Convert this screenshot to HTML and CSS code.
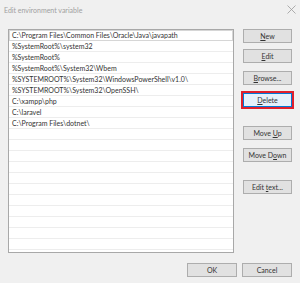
FILE: index.html
```html
<!DOCTYPE html>
<html>
<head>
<meta charset="utf-8">
<link rel="stylesheet" href="styles.css">
</head>
<body>
<div class="dialog">
  <div class="titlebar">
    <span class="title">Edit environment variable</span>
    <span class="close">
      <svg width="9" height="9" viewBox="0 0 9 9"><path d="M0.5 0.5 L8.5 8.5 M8.5 0.5 L0.5 8.5" stroke="#9a9a9a" stroke-width="0.8" fill="none"/></svg>
    </span>
  </div>
  <div class="main">
    <div class="list">
      <div class="row sel">C:\Program Files\Common Files\Oracle\Java\javapath</div>
      <div class="row">%SystemRoot%\system32</div>
      <div class="row">%SystemRoot%</div>
      <div class="row">%SystemRoot%\System32\Wbem</div>
      <div class="row">%SYSTEMROOT%\System32\WindowsPowerShell\v1.0\</div>
      <div class="row">%SYSTEMROOT%\System32\OpenSSH\</div>
      <div class="row">C:\xampp\php</div>
      <div class="row">C:\laravel</div>
      <div class="row">C:\Program Files\dotnet\</div>
      <div class="row"></div>
      <div class="row"></div>
      <div class="row"></div>
      <div class="row"></div>
      <div class="row"></div>
      <div class="row"></div>
      <div class="row"></div>
      <div class="row"></div>
      <div class="row"></div>
      <div class="row"></div>
      <div class="row"></div>
    </div>
    <div class="side">
      <button class="btn b-new"><u>N</u>ew</button>
      <button class="btn b-edit"><u>E</u>dit</button>
      <button class="btn b-browse"><u>B</u>rowse...</button>
      <div class="hl"><button class="btn b-delete"><u>D</u>elete</button></div>
      <button class="btn b-up">Move <u>U</u>p</button>
      <button class="btn b-down">Move D<u>o</u>wn</button>
      <button class="btn b-text">Edit <u>t</u>ext...</button>
    </div>
  </div>
  <div class="footer">
    <button class="btn">OK</button>
    <button class="btn">Cancel</button>
  </div>
</div>
</body>
</html>
```
FILE: styles.css
```css
html, body {
  margin: 0;
  padding: 0;
  background: #f0f0f0;
}
.dialog {
  width: 300px;
  height: 283px;
  box-sizing: border-box;
  font-family: Lato, "Noto Sans", sans-serif;
  font-size: 7px;
  color: #222;
  position: relative;
  overflow: hidden;
}
.titlebar {
  height: 20px;
  display: flex;
  align-items: center;
  justify-content: space-between;
  padding: 0 4px 0 4px;
}
.title {
  color: #a0a0a0;
  font-size: 7px;
}
.close {
  display: flex;
  align-items: center;
  margin-top: -2px;
}
.main {
  display: flex;
  padding: 9px 0 0 8px;
}
.list {
  width: 226px;
  height: 224px;
  box-sizing: border-box;
  border: 1px solid #a8a8a8;
  background: #fff;
  overflow: hidden;
}
.row {
  height: 11px;
  line-height: 10px;
  box-sizing: border-box;
  border-bottom: 1px solid #ededed;
  padding-left: 3px;
  white-space: nowrap;
  color: #333;
}
.row.sel {
  border: 1px solid #d6d6d6;
  line-height: 9px;
  padding-left: 2px;
}
.side {
  display: flex;
  flex-direction: column;
  align-items: flex-start;
  margin-left: 9px;
}
.btn {
  width: 49px;
  height: 14px;
  box-sizing: border-box;
  border: 1px solid #adadad;
  background: #e1e1e1;
  font-family: inherit;
  font-size: 7px;
  color: #333;
  padding: 0;
  margin: 0;
  line-height: 12px;
  text-align: center;
}
.btn u {
  text-decoration-thickness: 0.5px;
  text-underline-offset: 1px;
}
.b-edit { margin-top: 6px; }
.b-browse { margin-top: 8px; }
.hl {
  margin-top: 6px;
  margin-left: -2px;
  border: 2px solid #e0202c;
  padding: 0;
  display: flex;
}
.b-delete {
  background: #e5f1fb;
  border-color: #0078d7;
  height: 14px;
}
.b-up { margin-top: 17px; }
.b-down { margin-top: 8px; }
.b-text { margin-top: 18px; }
.footer {
  position: absolute;
  left: 0;
  right: 0;
  top: 263px;
  display: flex;
  justify-content: flex-end;
  gap: 5px;
  padding-right: 8px;
}
.footer .btn { width: 50px; }
```
